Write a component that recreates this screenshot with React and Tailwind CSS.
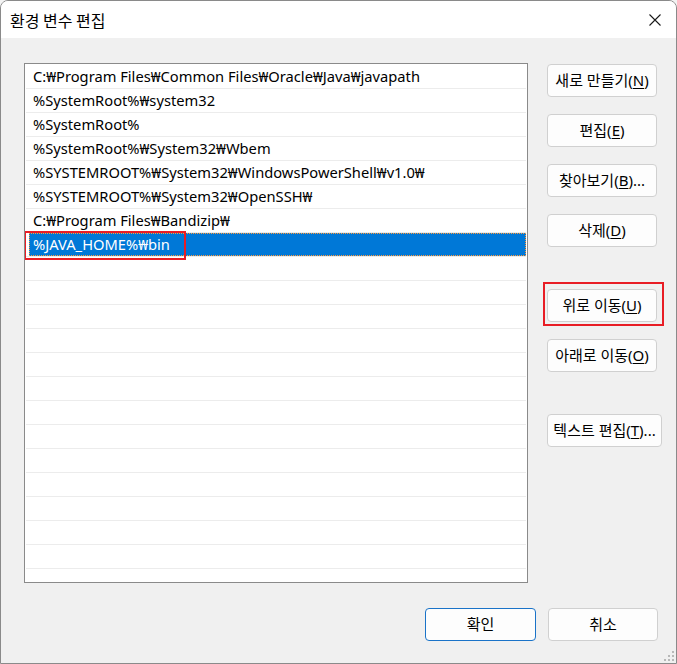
import React from "react";

const rows = [
  "C:₩Program Files₩Common Files₩Oracle₩Java₩javapath",
  "%SystemRoot%₩system32",
  "%SystemRoot%",
  "%SystemRoot%₩System32₩Wbem",
  "%SYSTEMROOT%₩System32₩WindowsPowerShell₩v1.0₩",
  "%SYSTEMROOT%₩System32₩OpenSSH₩",
  "C:₩Program Files₩Bandizip₩",
];

function Btn({ label, u, suffix = "", width = "w-[110px]", primary = false }) {
  return (
    <div
      className={`${width} h-[33px] rounded-[4px] border ${
        primary ? "border-[#1a73c8]" : "border-[#d0d0d0]"
      } bg-[#fdfdfd] flex items-center justify-center text-[15px] text-black whitespace-nowrap`}
    >
      <span>{label}</span>
      {u !== undefined && (
        <span>
          (<span className="underline underline-offset-[2px]">{u}</span>){suffix}
        </span>
      )}
    </div>
  );
}

export default function App() {
  const empty = Array.from({ length: 15 });
  return (
    <div
      className="w-[677px] h-[664px] bg-[#f3f3f3] overflow-hidden"
      style={{ fontFamily: '"Noto Sans", "Noto Sans CJK KR", sans-serif' }}
    >
      <div className="relative w-[677px] h-[664px] rounded-t-[8px] border border-[#8a8a8a] bg-[#f0f0f0] flex flex-col overflow-hidden">
        {/* title bar */}
        <div className="h-[37px] bg-white flex items-center justify-between pl-[9px] pr-[14px] shrink-0">
          <span className="text-[16px] text-black" style={{ fontFamily: '"Noto Sans CJK KR", sans-serif' }}>
            환경 변수 편집
          </span>
          <svg width="14" height="14" viewBox="0 0 14 14">
            <path d="M1.5 1.5 L12.5 12.5 M12.5 1.5 L1.5 12.5" stroke="#1a1a1a" strokeWidth="1.1" fill="none" />
          </svg>
        </div>

        {/* main */}
        <div className="flex pl-[23px] pt-[25px]">
          <div className="w-[504px] h-[520px] border border-[#8a8a8a] bg-white pt-[1px] overflow-hidden shrink-0">
            {rows.map((r, i) => (
              <div
                key={i}
                className="h-[24px] mx-[1px] border-b border-[#ececec] pl-[7px] flex items-center text-[14.7px] text-black whitespace-nowrap"
              >
                {r}
              </div>
            ))}
            <div className="h-[24px] mx-[1px] border-b border-[#ececec] pl-[3px] flex">
              <div className="relative flex-1 h-[23px] bg-[#0078d7] border border-dotted border-[#ff9a3c] flex items-center pl-[3px] text-[14.7px] text-white whitespace-nowrap">
                %JAVA_HOME%₩bin
                <div className="absolute left-[-6px] top-[-3px] w-[162px] h-[29px] border-2 border-[#e81d25]" />
              </div>
            </div>
            {empty.map((_, i) => (
              <div key={`e${i}`} className="h-[24px] mx-[1px] border-b border-[#ececec]" />
            ))}
          </div>

          <div className="relative flex flex-col pl-[19px] pt-[1px]">
            <Btn label="새로 만들기" u="N" />
            <div className="h-[17px]" />
            <Btn label="편집" u="E" />
            <div className="h-[17px]" />
            <Btn label="찾아보기" u="B" suffix="..." />
            <div className="h-[17px]" />
            <Btn label="삭제" u="D" />
            <div className="h-[42px]" />
            <div className="relative">
              <Btn label="위로 이동" u="U" />
              <div className="absolute left-[-4px] top-[-7px] w-[121px] h-[44px] border-2 border-[#e81d25]" />
            </div>
            <div className="h-[17px]" />
            <Btn label="아래로 이동" u="O" />
            <div className="h-[42px]" />
            <Btn label="텍스트 편집" u="T" suffix="..." width="w-[115px]" />
          </div>
        </div>

        {/* bottom buttons */}
        <div className="flex justify-end gap-[12px] pr-[18px] pt-[25px]">
          <Btn label="확인" primary width="w-[111px]" />
          <Btn label="취소" />
        </div>

        {/* resize grip */}
        <svg className="absolute right-[1px] bottom-[1px]" width="12" height="12" viewBox="0 0 12 12">
          <rect x="9" y="1" width="2" height="2" fill="#b8b8b8" />
          <rect x="5" y="5" width="2" height="2" fill="#b8b8b8" />
          <rect x="9" y="5" width="2" height="2" fill="#b8b8b8" />
          <rect x="1" y="9" width="2" height="2" fill="#b8b8b8" />
          <rect x="5" y="9" width="2" height="2" fill="#b8b8b8" />
          <rect x="9" y="9" width="2" height="2" fill="#b8b8b8" />
        </svg>
      </div>
    </div>
  );
}
